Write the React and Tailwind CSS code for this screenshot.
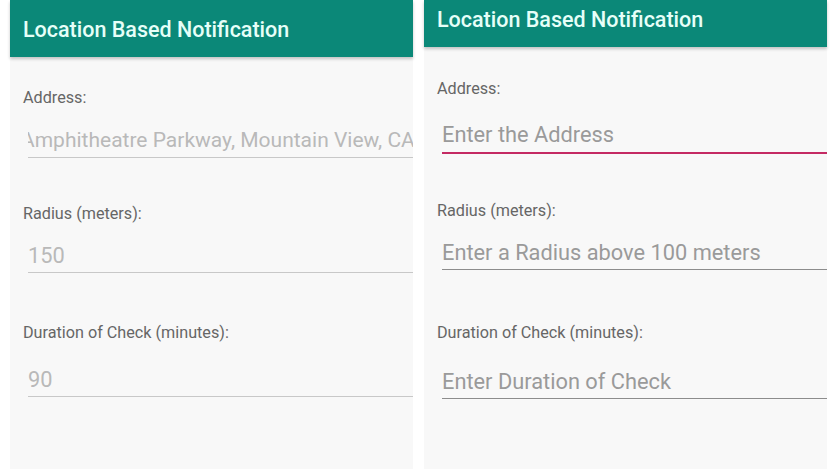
const font = { fontFamily: 'Roboto, "Liberation Sans", sans-serif' };

const Header = ({ className }) => (
  <div
    className={`relative z-10 flex items-center bg-[#0b8878] pl-[13px] shadow-[0_2px_3px_rgba(0,0,0,0.22)] ${className}`}
  >
    <span className="text-[21.5px] font-medium leading-[26px] text-[#e6fff8]">
      Location Based Notification
    </span>
  </div>
);

const Label = ({ children, className }) => (
  <div className={`pl-[13px] text-[16.2px] leading-[21px] text-[#666666] ${className}`}>{children}</div>
);

const Input = ({ children, className, line = 'border-b border-[#c8c8c8]', color = 'text-[#b9b9b9]' }) => (
  <div className={`ml-[18px] overflow-hidden ${line} ${className}`}>
    <div className={`whitespace-nowrap text-[21.8px] leading-[28px] ${color}`}>{children}</div>
  </div>
);

export default function App() {
  return (
    <div className="flex h-[469px] w-[834px] overflow-hidden bg-white" style={font}>
      {/* saved settings */}
      <div className="ml-[10px] flex w-[403px] flex-col bg-[#f8f8f8]">
        <Header className="h-[57px] pt-[3px]" />
        <Label className="mt-[30px]">Address:</Label>
        <Input className="mt-[18px] pb-[3px]">
          <span className="ml-[-7px] text-[21px]">Amphitheatre Parkway, Mountain View, CA</span>
        </Input>
        <Label className="mt-[45px]">Radius (meters):</Label>
        <Input className="mt-[18px] pb-[2px]">150</Input>
        <Label className="mt-[49px]">Duration of Check (minutes):</Label>
        <Input className="mt-[23px] pb-[2px]">90</Input>
      </div>

      {/* empty form */}
      <div className="ml-[11px] flex w-[403px] flex-col bg-[#f8f8f8]">
        <Header className="h-[47px] pb-[7px]" />
        <Label className="mt-[31px]">Address:</Label>
        <Input
          className="mt-[22px] pb-[3px]"
          line="border-b-2 border-[#c42a63]"
          color="text-[#9a9a9a]"
        >
          Enter the Address
        </Input>
        <Label className="mt-[46px]">Radius (meters):</Label>
        <Input className="mt-[18px] pb-[2px]" line="border-b border-[#8c8c8c]" color="text-[#9a9a9a]">
          Enter a Radius above 100 meters
        </Input>
        <Label className="mt-[52px]">Duration of Check (minutes):</Label>
        <Input className="mt-[25px] pb-[2px]" line="border-b border-[#8c8c8c]" color="text-[#9a9a9a]">
          Enter Duration of Check
        </Input>
      </div>
    </div>
  );
}
